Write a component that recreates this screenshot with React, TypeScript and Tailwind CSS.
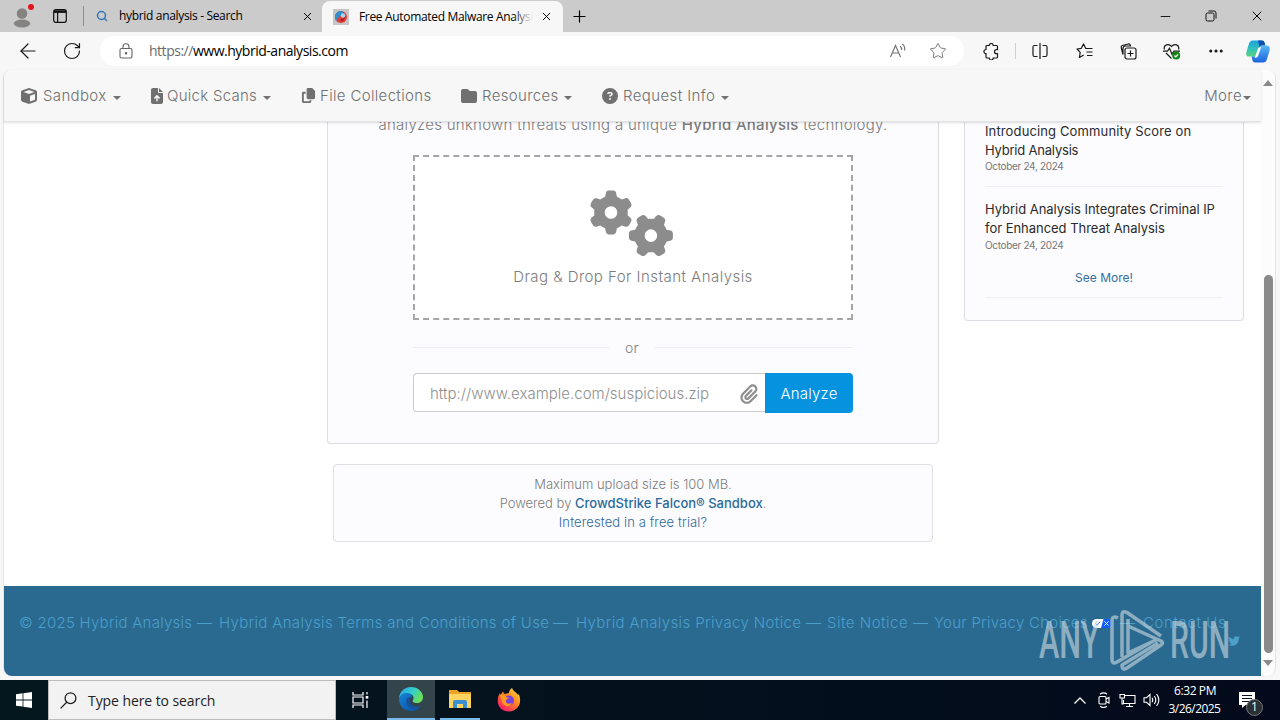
import type { ReactNode } from 'react'
import { ArrowLeft, Ellipsis, Minus, Plus, RotateCw, Search, Star, X } from 'lucide-react'
import {
  FaCircleQuestion,
  FaCopy,
  FaCube,
  FaFileArrowUp,
  FaFolder,
  FaGears,
  FaPaperclip,
  FaTwitter,
} from 'react-icons/fa6'

function Slot({ className, children }: { className: string; children: ReactNode }) {
  return <div className={`flex shrink-0 items-center justify-center ${className}`}>{children}</div>
}

function TabBar() {
  return (
    <div className="flex h-8 shrink-0 items-center bg-[#cbcbcb] text-black">
      <Slot className="relative w-11">
        <svg width="18" height="20" viewBox="0 0 18 20" className="mt-[3px]">
          <circle cx="9" cy="5.5" r="5.3" fill="#858282" />
          <ellipse cx="9" cy="15.5" rx="8.2" ry="4" fill="#858282" />
        </svg>
        <span className="absolute -top-[1px] left-7 size-[6px] rounded-full bg-[#e3141c]" />
      </Slot>
      <Slot className="w-8">
        <svg width="14" height="14" viewBox="0 0 14 14" fill="none" stroke="#111" strokeWidth="1.2">
          <rect x=".7" y=".7" width="12.6" height="12.6" rx="2" />
          <path d="M1 2.6h12" strokeWidth="2.6" />
          <path d="M4.6 3v10" />
        </svg>
      </Slot>
      <div className="ml-[7px] h-5 w-px bg-[#8c8c8c]" />
      <div className="flex h-full w-[238px] items-center pl-3">
        <Search size={12} strokeWidth={3} color="#3176bd" />
        <span className="ml-[11px] w-[182px] whitespace-nowrap text-[12px] tracking-[-0.33px]">hybrid analysis - Search</span>
        <X size={13} strokeWidth={1.8} />
      </div>
      <div className="mt-[1px] flex h-[31px] w-[241px] items-center rounded-t-lg bg-[#f7f7f7] pl-[11px]">
        <svg width="16" height="16" viewBox="0 0 16 16">
          <rect width="16" height="16" fill="#c9c4c6" />
          <circle cx="8" cy="8" r="6" fill="#e23d38" />
          <path d="M3 12C1 8 2 3 7 2c3-.5 4 1 3 3L5 9z" fill="#2f8fcb" />
          <circle cx="10" cy="6.5" r="2.2" fill="#a9d8ee" />
          <path d="M8 9.5q3 1 4-2-.5 5-4.5 5z" fill="#a81c2c" />
        </svg>
        <span className="relative ml-[10px] w-[174px] overflow-hidden whitespace-nowrap text-[12px] tracking-[-0.33px]">
          Free Automated Malware Analysis
          <span className="absolute inset-y-0 right-0 w-5 bg-linear-to-r from-transparent to-[#f7f7f7]" />
        </span>
        <X size={13} strokeWidth={1.8} className="ml-[7px]" />
      </div>
      <Slot className="w-8">
        <Plus size={19} strokeWidth={1.5} />
      </Slot>
      <Slot className="ml-auto w-[46px]">
        <Minus size={15} strokeWidth={1.4} />
      </Slot>
      <Slot className="w-[46px]">
        <svg width="12" height="12" viewBox="0 0 12 12" fill="none" stroke="#111">
          <rect x="1" y="3" width="8" height="8" rx="1.5" />
          <path d="M3.5 1H9q2 0 2 2v5.5" />
        </svg>
      </Slot>
      <Slot className="w-[46px]">
        <X size={16} strokeWidth={1.5} />
      </Slot>
    </div>
  )
}

function Toolbar() {
  return (
    <div className="flex h-[38px] shrink-0 items-center bg-[#f7f7f7] text-[#1a1a1a]">
      <Slot className="ml-[6px] w-11">
        <ArrowLeft size={24} strokeWidth={1.2} />
      </Slot>
      <Slot className="w-11">
        <RotateCw size={20} strokeWidth={1.4} />
      </Slot>
      <div className="ml-[6px] flex h-[30px] w-[864px] items-center rounded-full bg-white">
        <Slot className="ml-[14px] w-6 text-[#666]">
          <svg width="14" height="16" viewBox="0 0 14 16" fill="none" stroke="currentColor" strokeWidth="1.1">
            <rect x="1" y="5.5" width="12" height="9.5" rx="1.5" />
            <path d="M4 5.5V3.8a3 3 0 0 1 6 0v1.7" />
            <circle cx="7" cy="10.2" r=".7" fill="currentColor" />
          </svg>
        </Slot>
        <span className="-mt-px ml-[11px] whitespace-nowrap text-[14px] tracking-[-0.48px] text-[#6b6b6b]">
          https://<span className="text-black">www.hybrid-analysis.com</span>
        </span>
        <Slot className="ml-auto w-10 text-[#777]">
          <svg width="18" height="16" viewBox="0 0 18 16" fill="none" stroke="currentColor" strokeWidth="1.2">
            <path d="M1.5 14 6.5 2.500 11.5 14M3.3 10h6.500" />
            <path d="M11 3q2 1.500 1.500 4M13 1q3.500 2 2.500 6.500" />
          </svg>
        </Slot>
        <Slot className="mr-[6px] w-10 text-[#777]">
          <Star size={18} strokeWidth={1.3} />
        </Slot>
      </div>
      <Slot className="ml-[5px] w-11">
        <svg width="16" height="17" viewBox="0 0 16 17" fill="none" stroke="currentColor" strokeWidth="1.2">
          <path d="M4 2.500h2.200a2 2 0 0 1 4 0h3.300q1 0 1 1v3.200h-1a2 2 0 0 0 0 4h1v3.300q0 1-1 1h-3.300a2 2 0 0 1-4 0H4q-1 0-1-1v-3.300a2.100 2.100 0 0 1 0-4.200v-3q0-1 1-1z" />
        </svg>
      </Slot>
      <div className="ml-[2px] h-4 w-px bg-[#cfcfcf]" />
      <Slot className="ml-[2px] w-11">
        <svg width="16" height="16" viewBox="0 0 16 16" fill="none" stroke="currentColor" strokeWidth="1.2">
          <path d="M5.500 2.500h-3q-1.500 0-1.500 1.500v8q0 1.500 1.500 1.500h3M10.500 2.500h3Q15 2.500 15 4v8q0 1.500-1.500 1.500h-3M8 0v16" />
        </svg>
      </Slot>
      <Slot className="w-11">
        <svg width="17" height="16" viewBox="0 0 17 16" fill="none" stroke="currentColor" strokeWidth="1.2" strokeLinejoin="round">
          <path d="M13 5.500H9.800L7.500 1 5.300 5.300 1 6l3.200 3.300-.8 5.200L7.700 12M10 5.500h6.500M10.500 9h6M11 12.500h5.500" />
        </svg>
      </Slot>
      <Slot className="w-11">
        <svg width="17" height="17" viewBox="0 0 17 17" fill="none" stroke="currentColor" strokeWidth="1.2">
          <rect x="5" y="5" width="11" height="11" rx="2" />
          <path d="M10.500 7.500v6M7.500 10.500h6M3 11.500 1.200 4.500q-.3-1.500 1-2l6-1.500q1.500-.2 2 1l.3 1H5.500Q3 3 3 5.500z" />
        </svg>
      </Slot>
      <Slot className="w-11">
        <svg width="18" height="17" viewBox="0 0 18 17" fill="none" stroke="currentColor" strokeWidth="1.2">
          <path d="M1.500 6.500C0 1.500 6 0 8.500 3.500 11 0 17 1.500 15.500 6.500M3 10l5.500 5.500M0 8.200h4.500l2-3 2.500 6 2-3h6" />
          <circle cx="13.200" cy="12.500" r="4" fill="#168519" stroke="none" />
          <path d="m11.500 12.500 1.300 1.300 2.300-2.500" stroke="#fff" />
        </svg>
      </Slot>
      <Slot className="w-11">
        <Ellipsis size={18} strokeWidth={2.2} />
      </Slot>
      <Slot className="w-[38px]">
        <svg width="24" height="23" viewBox="0 0 24 23" className="ml-[2px]">
          <defs>
            <linearGradient id="copilotLeft" x1="0" y1="0" x2="0" y2="1">
              <stop offset="0" stopColor="#1aa0dd" />
              <stop offset=".6" stopColor="#38c5b5" />
              <stop offset="1" stopColor="#5ad17a" />
            </linearGradient>
            <linearGradient id="copilotRight" x1="0" y1="0" x2="0" y2="1">
              <stop offset="0" stopColor="#5bb8f5" />
              <stop offset="1" stopColor="#1a63dd" />
            </linearGradient>
          </defs>
          <path d="M7 .5h9q2 0 2.500 2l.8 3h-3q-2 0-2.700 2l-2.300 7q-.7 2-2.500 2H3Q-.3 16.500.3 12.500L3 3.500Q4 .5 7 .5z" fill="url(#copilotLeft)" />
          <path d="M12 .5h4q2 0 2.500 2l.8 3h-3q-2 0-2.700 2z" fill="#134fae" />
          <path d="M17 22.500H9q-2 0-2.500-2l-1-4h3q2 0 2.700-2l2.300-7q.7-2 2.500-2H21q3.300.5 2.700 4.500l-2.700 9q-1 3.500-4 3.500z" fill="url(#copilotRight)" />
          <path d="m14 8-2.700 8q-.5 1-1.500 1l3-8.500z" fill="#fff" stroke="#fff" strokeWidth="1.5" />
        </svg>
      </Slot>
    </div>
  )
}

function Caret() {
  return (
    <svg width="8" height="4" viewBox="0 0 8 4" className="mt-[2px] shrink-0">
      <path d="M0 0h8L4 4z" fill="currentColor" />
    </svg>
  )
}

function NavBar() {
  return (
    <nav className="z-10 flex h-[52px] shrink-0 items-center whitespace-nowrap rounded-tl-lg border-b border-[#e2e2e2] bg-[#f7f7f7] pl-[17px] pr-[10px] pt-[2px] text-[15px] font-light text-[#707070] shadow-sm">
      <FaCube size={16} className="-mt-[2px]" />
      <span className="ml-[6px] w-[70px] tracking-[0.35px]">Sandbox</span>
      <Caret />
      <FaFileArrowUp size={16} className="-mt-[2px] ml-[28px]" />
      <span className="ml-[2px] w-[96px] tracking-[0.28px]">Quick Scans</span>
      <Caret />
      <FaCopy size={15} className="-mt-[2px] ml-[30px]" />
      <span className="ml-1 w-[112px] tracking-[0.34px]">File Collections</span>
      <FaFolder size={16} className="-mt-[2px] ml-[29px]" />
      <span className="ml-[5px] w-[82px] tracking-[0.35px]">Resources</span>
      <Caret />
      <FaCircleQuestion size={16} className="-mt-[2px] ml-[30px]" />
      <span className="ml-[5px] w-[98px] tracking-[0.4px]">Request Info</span>
      <Caret />
      <span className="ml-auto mr-[1px] tracking-[0.4px]">More</span>
      <Caret />
    </nav>
  )
}

function UploadColumn() {
  return (
    <div className="ml-[323px] w-[612px] shrink-0">
      <section className="flex h-[322px] flex-col items-center rounded-b border border-t-0 border-[#dcdce2] bg-[#fcfcff] text-[15px] font-light text-[#7c7c7c]">
        <p className="-mt-2 h-[41px] whitespace-nowrap leading-[22px] tracking-[0.27px]">
          analyzes unknown threats using a unique <b className="font-medium">Hybrid Analysis</b> technology.
        </p>
        <div className="flex h-[165px] w-[440px] shrink-0 flex-col items-center border-2 border-dashed border-[#a5a5a5] bg-white">
          <FaGears size={84} className="mt-6 -ml-[2px] text-[#8c8c8c]" />
          <span className="mt-[1px] leading-[22px] tracking-[0.46px]">Drag &amp; Drop For Instant Analysis</span>
        </div>
        <div className="mt-4 flex h-[22px] w-[440px] items-center">
          <hr className="w-[196px] border-[#ececf5]" />
          <span className="flex-1 text-center text-[14px] tracking-[0.4px]">or</span>
          <hr className="w-[198px] border-[#ececf5]" />
        </div>
        <div className="mt-[15px] flex h-10 w-[440px] items-start">
          <div className="flex h-[39px] w-[352px] items-center rounded-l border border-r-0 border-[#ccc] bg-white pl-4 text-[#8f8f8f]">
            <span className="mt-[3px] tracking-[0.01px]">http://www.example.com/suspicious.zip</span>
            <FaPaperclip size={20} className="ml-auto mr-[6px] mt-[2px]" />
          </div>
          <button className="h-10 w-[88px] rounded-r bg-[#0593df] pt-[2px] tracking-[0.2px] text-white">Analyze</button>
        </div>
      </section>
      <section className="mx-auto mt-5 h-[78px] w-[600px] rounded border border-[#dfdfe4] bg-[#fcfcff] pt-[10px] text-center text-[13px] font-light leading-[19px] text-[#7c7c7c]">
        <p>Maximum upload size is 100 MB.</p>
        <p>
          Powered by <a className="font-medium text-[#2a6a9b]">CrowdStrike Falcon® Sandbox</a>.
        </p>
        <p className="tracking-[0.12px] text-[#2f689c]">Interested in a free trial?</p>
      </section>
    </div>
  )
}

function NewsColumn() {
  return (
    <aside className="ml-[25px] h-[199px] w-[280px] shrink-0 rounded-b border border-t-0 border-[#dcdce4] bg-[#fcfcff] px-5 text-[13px] leading-[19px] text-[#2b2b2b]">
      <p className="whitespace-nowrap">
        <span className="tracking-[0.13px]">Introducing Community Score on</span>
        <br />
        <span className="tracking-[-0.2px]">Hybrid Analysis</span>
      </p>
      <p className="-mt-px text-[10px] leading-[15px] tracking-[-0.32px] text-[#777]">October 24, 2024</p>
      <hr className="mt-3 border-[#eeeef4]" />
      <p className="mt-[13px] whitespace-nowrap tracking-[-0.03px]">
        Hybrid Analysis Integrates Criminal IP
        <br />
        for Enhanced Threat Analysis
      </p>
      <p className="text-[10px] leading-[14px] tracking-[-0.32px] text-[#777]">October 24, 2024</p>
      <p className="mt-4 text-center text-[12px] text-[#356f9f]">See More!</p>
      <hr className="mt-[10px] border-[#eeeef4]" />
    </aside>
  )
}

function SiteFooter() {
  return (
    <footer className="flex h-[90px] shrink-0 items-start whitespace-nowrap rounded-bl-lg bg-[#2a6a90] pl-[15px] pt-[26px] text-[15px] font-light leading-[22px] text-[#4a9fcb]">
      <span className="w-[178px] tracking-[0.26px]">© 2025 Hybrid Analysis</span>
      <span className="w-[22px]">—</span>
      <span className="w-[334px] tracking-[0.34px]">Hybrid Analysis Terms and Conditions of Use</span>
      <span className="w-[23px]">—</span>
      <span className="w-[230px] tracking-[0.38px]">Hybrid Analysis Privacy Notice</span>
      <span className="w-[21px]">—</span>
      <span className="w-[86px] tracking-[0.5px]">Site Notice</span>
      <span className="w-[21px]">—</span>
      <span className="w-[158px] tracking-[0.25px]">Your Privacy Choices</span>
      <svg width="20" height="9" viewBox="0 0 20 9" className="mt-[7px]">
        <rect width="20" height="9" rx="4.5" fill="#0b5fff" />
        <path d="M4.500 0h7L9 9H4.500a4.500 4.500 0 0 1 0-9z" fill="#fff" />
        <path d="m3.500 4.500 1.700 1.700L8 2.700" fill="none" stroke="#0b5fff" />
        <path d="m12.500 2.500 4 4m0-4-4 4" fill="none" stroke="#fff" />
      </svg>
      <span className="ml-2 w-[23px]">—</span>
      <span className="w-[81px] tracking-[0.6px]">Contact Us</span>
      <FaTwitter size={12} className="ml-1 mt-[23px]" />
    </footer>
  )
}

function ScrollBar() {
  return (
    <div className="flex w-[15px] shrink-0 flex-col items-center rounded-r-lg border-r border-[#e4e4e4] bg-[#fcfcfc]">
      <svg width="10" height="6" viewBox="0 0 10 6" className="mt-[10px]">
        <path d="M5 0 10 6H0z" fill="#8a8a8a" />
      </svg>
      <div className="mt-[189px] h-[378px] w-[9px] rounded-full bg-[#8a8a8a]" />
      <svg width="10" height="6" viewBox="0 0 10 6" className="mt-[7px]">
        <path d="M0 0h10L5 6z" fill="#8a8a8a" />
      </svg>
    </div>
  )
}

function Watermark() {
  return (
    <div className="absolute left-[1039px] top-[609px] z-20 flex h-16 w-[194px] items-center text-[#cfdbe1] opacity-60">
      <span className="w-[71px] origin-left scale-x-[0.59] font-[Roboto] text-[52px] font-medium leading-none">ANY</span>
      <svg width="58" height="64" viewBox="0 0 58 64" fill="none" stroke="currentColor" strokeWidth="3.5" strokeLinejoin="round" className="shrink-0">
        <path d="M8 9Q2 6 2 12v38q0 6 5 3l33-19" />
        <path d="M12 12V6q0-5 5-2.500L51 27M12 48V12M18 17l33 15q3 2 0 4L17 59q-5 3-5-3l36-22M18 10v34l30-14" />
      </svg>
      <span className="ml-[2px] w-[62px] origin-left scale-x-[0.58] font-[Roboto] text-[52px] font-medium leading-none">RUN</span>
    </div>
  )
}

function EdgeLogo() {
  return (
    <svg width="24" height="24" viewBox="0 0 24 24">
      <defs>
        <linearGradient id="edgeTop" x1="0" y1="0" x2="1" y2=".4">
          <stop offset="0" stopColor="#259ee5" />
          <stop offset=".6" stopColor="#35cfcb" />
          <stop offset="1" stopColor="#68df5b" />
        </linearGradient>
        <linearGradient id="edgeLow" x1="0" y1="0" x2="1" y2="1">
          <stop offset="0" stopColor="#1383d8" />
          <stop offset="1" stopColor="#0c4f9f" />
        </linearGradient>
      </defs>
      <path d="M0 12C0 5 5 0 12 0s12 5 12 10c0 4-3 6-6 6-4 0-5-1.500-4-3 2-4-2-7-6-6-5 0-8 3-8 5z" fill="url(#edgeTop)" />
      <path d="M0 12c1-4 4-6 8-6 3 0 5 2 5 4-5 1-4 9 2 10 3 .5 5-.5 7-1.500C19 23 16 24 12 24 5 24 0 19 0 12z" fill="url(#edgeLow)" />
      <path d="M8 11c-3 5 1 11 7 11 3 0 5-1 7-3.500-7 3.500-13-1-10.500-8.500z" fill="#14539f" />
    </svg>
  )
}

function FirefoxLogo() {
  return (
    <svg width="24" height="24" viewBox="0 0 24 24">
      <defs>
        <linearGradient id="foxBody" x1="1" y1="0" x2=".2" y2="1">
          <stop offset="0" stopColor="#fff04a" />
          <stop offset=".45" stopColor="#ff8a1f" />
          <stop offset="1" stopColor="#f5156c" />
        </linearGradient>
      </defs>
      <path d="M12 5c0-2 1-4 3-5 1 3 4 4 6 7 1-1 0-2 0-2 5 8 1 18-9 18.500C4 23.500-.5 17 1 10c.3-2 1-3.500 2-5l.5 2L6 3.500 7.500 6z" fill="url(#foxBody)" />
      <circle cx="12" cy="12.5" r="5" fill="#7a42d8" />
      <path d="M3 7c3-1 5 0 6 2l3 1-3 2c-1 3 2 5 6 3-3 5-9 3-10-1z" fill="#ff9a1c" />
    </svg>
  )
}

function TaskBar() {
  return (
    <div className="flex h-10 shrink-0 items-center bg-linear-to-r from-[#04171e] to-[#030a1b] text-white">
      <Slot className="w-12">
        <svg width="16" height="16" viewBox="0 0 16 16" fill="#fff">
          <path d="M0 2.200 6.600 1.300v6.200H0zM7.400 1.200 16 0v7.500H7.400zM0 8.400h6.600v6.200L0 13.700zM7.400 8.400H16V16l-8.600-1.200z" />
        </svg>
      </Slot>
      <div className="flex h-full w-[288px] items-center border border-[#bcbcbc] bg-[#f2f2f2] pl-[11px] text-[#222]">
        <svg width="17" height="17" viewBox="0 0 17 17" fill="none" stroke="currentColor" strokeWidth="1.3">
          <circle cx="10.500" cy="6.200" r="5.400" />
          <path d="M6.700 10.200.6 16.400" />
        </svg>
        <span className="ml-[11px] whitespace-nowrap text-[14px] tracking-[-0.08px]">Type here to search</span>
      </div>
      <Slot className="w-[51px] pr-[2px]">
        <svg width="17" height="16" viewBox="0 0 17 16" fill="none" stroke="#fff" strokeWidth="1.2">
          <path d="M1 0v3h10V0M1 16v-3h10v3M1 5h10v6H1zM15 0v2.500M15 8.500V16" />
          <path d="M13.700 4h2.600v2.600h-2.600z" fill="#fff" stroke="none" />
        </svg>
      </Slot>
      <div className="flex h-full w-12 items-center justify-center border-b-2 border-[#76b9ed] bg-[#33444b]">
        <EdgeLogo />
      </div>
      <div className="ml-[5px] flex h-full w-10 items-center justify-center border-b-2 border-[#76b9ed]">
        <svg width="22" height="18" viewBox="0 0 22 18">
          <path d="M0 0h8l2 2h12v16H0z" fill="#e8a526" />
          <path d="M0 4h22v14H0z" fill="#fcd462" />
          <path d="M4 18v-6q0-2 2-2h10q2 0 2 2v6h-4v-4H8v4z" fill="#3c8fd3" />
        </svg>
      </div>
      <Slot className="ml-1 w-[49px]">
        <FirefoxLogo />
      </Slot>
      <div className="ml-auto flex h-full items-center">
        <svg width="12" height="7" viewBox="0 0 12 7" fill="none" stroke="#fff" strokeWidth="1.3">
          <path d="m.5 6.500 5.500-5.500 5.500 5.500" />
        </svg>
        <svg width="12" height="16" viewBox="0 0 12 16" fill="none" stroke="#fff" strokeWidth="1.1" className="ml-[12px]">
          <rect x="1" y="4.500" width="7" height="7.500" rx="1" />
          <path d="m8 7 3-1.500v5.500L8 9.500M2 2.200Q5.500-.5 9 2.200M2 14.200q3.500 2.500 7 0" />
        </svg>
        <svg width="17" height="15" viewBox="0 0 17 15" fill="none" stroke="#fff" strokeWidth="1.1" className="ml-[9px]">
          <path d="M6 2.500h10v8H4.500V7M7 13.500h7M10.500 10.500v3M1 1.500h4.500V5H1zM3 5v6h1.500" />
        </svg>
        <svg width="17" height="14" viewBox="0 0 17 14" fill="none" stroke="#fff" strokeWidth="1.1" className="ml-[7px]">
          <path d="M1 4.700h2.500L7 1.500v11L3.500 9.300H1zM9 4.800q1.500 2.200 0 4.400M11.300 3q3 4 0 8M13.600 1.200q4.500 5.800 0 11.600" />
        </svg>
        <div className="ml-2 w-[54px] whitespace-nowrap text-center text-[12px] leading-[18px]">
          <p className="tracking-[-0.4px]">6:32 PM</p>
          <p className="-ml-px tracking-[-0.55px]">3/26/2025</p>
        </div>
        <div className="relative ml-[17px] mr-[24px]">
          <svg width="17" height="17" viewBox="0 0 17 17">
            <path d="M0 0h16v13H6.500L3 16v-3H0z" fill="#fff" />
            <path d="M3 3.500h10M3 6.500h10M3 9.500h7" stroke="#07111f" />
          </svg>
          <span className="absolute left-[7px] top-[7px] flex size-[17px] items-center justify-center rounded-full border border-[#777] bg-[#2b2f36] text-[12px]">1</span>
        </div>
      </div>
    </div>
  )
}

export default function App() {
  return (
    <div className="relative flex h-[720px] w-[1280px] flex-col overflow-hidden bg-[#f7f7f7] font-['Open_Sans',sans-serif]">
      <TabBar />
      <Toolbar />
      <div className="flex h-[606px] shrink-0 pl-[3px]">
        <div className="flex w-[1258px] flex-col rounded-l-lg border-l border-[#e4e4e4] bg-white font-[Inter,sans-serif]">
          <NavBar />
          <main className="flex h-[464px] shrink-0 items-start overflow-hidden">
            <UploadColumn />
            <NewsColumn />
          </main>
          <SiteFooter />
        </div>
        <ScrollBar />
      </div>
      <div className="h-1 shrink-0" />
      <TaskBar />
      <Watermark />
    </div>
  )
}
